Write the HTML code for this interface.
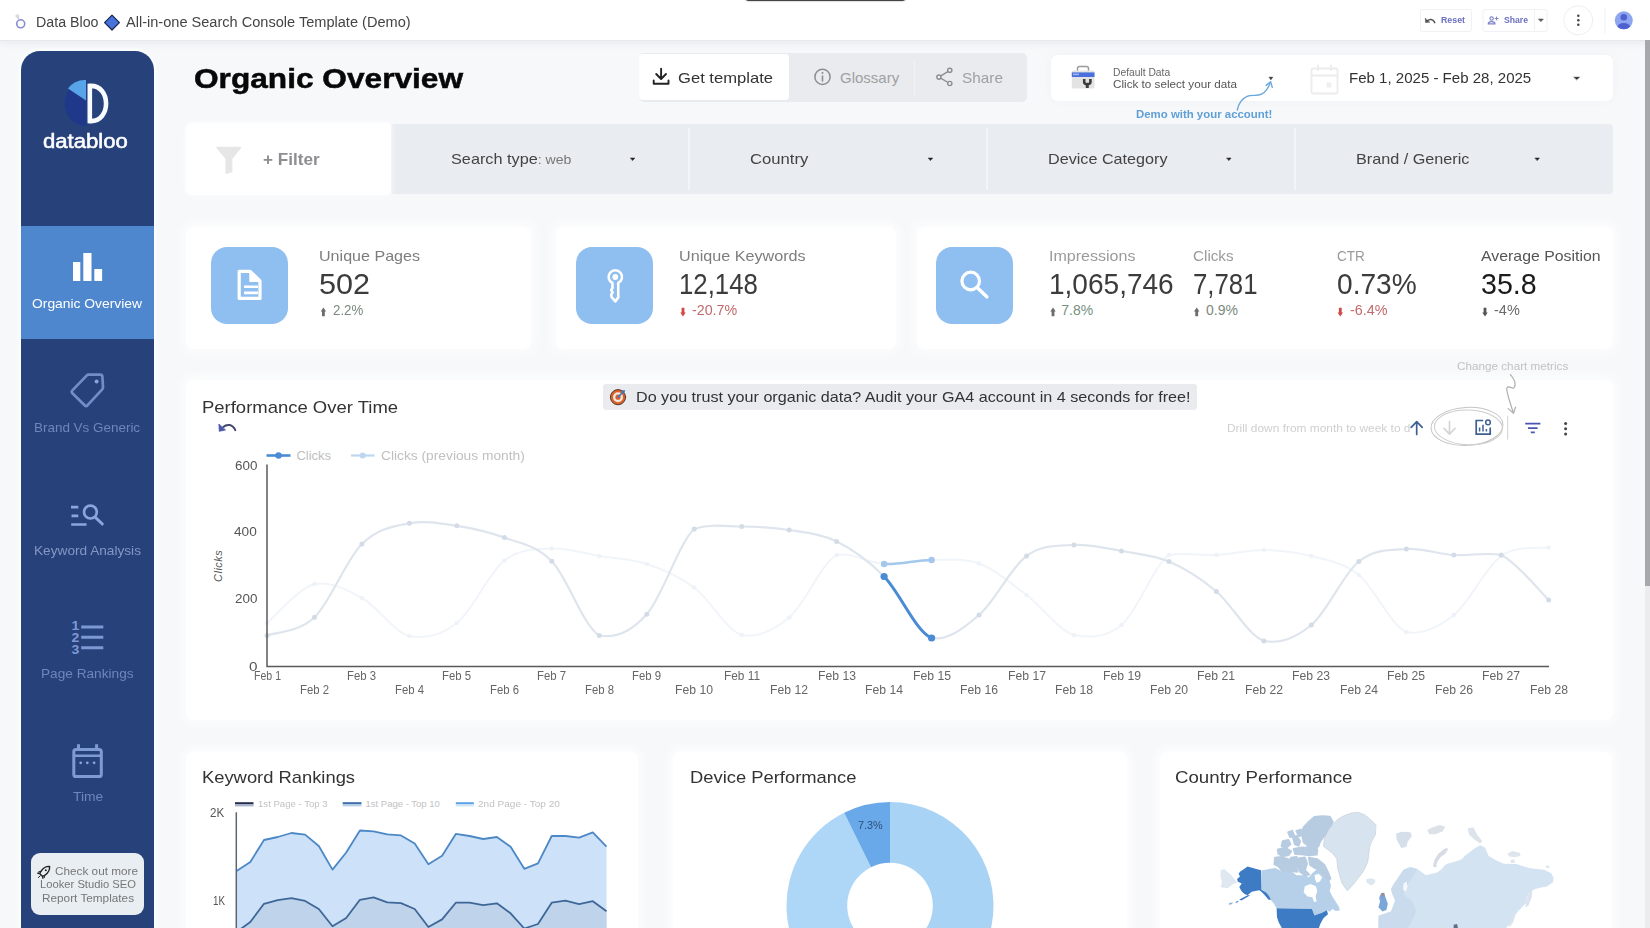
<!DOCTYPE html>
<html lang="en"><head><meta charset="utf-8"><title>All-in-one Search Console Template (Demo)</title>
<style>
html,body{margin:0;padding:0;}
body{width:1650px;height:928px;overflow:hidden;background:#f7f8fa;font-family:"Liberation Sans",sans-serif;position:relative;}
.abs{position:absolute;}
.t{position:absolute;white-space:nowrap;transform-origin:0 50%;}
.card{position:absolute;background:#fff;border-radius:8px;box-shadow:0 0 10px 4px rgba(255,255,255,.9),0 1px 6px rgba(60,70,90,.05);}
.ib{position:absolute;width:77px;height:77px;border-radius:16px;background:#8fbef0;}
svg{position:absolute;overflow:visible;}
</style></head>
<body>

<!-- top bar -->
<div class="abs" style="left:0;top:0;width:1650px;height:40px;background:#fff;border-bottom:1px solid #e6e8eb;box-shadow:0 2px 8px rgba(60,64,67,.08);"></div>
<div class="abs" style="left:744px;top:-9px;width:163px;height:10.2px;background:#444;border-radius:7px;box-shadow:0 0 1.5px rgba(40,40,40,.7);"></div>
<!-- right gutter + scrollbar -->
<div class="abs" style="left:1645px;top:40px;width:5px;height:888px;background:#ececee;"></div>
<div class="abs" style="left:1645px;top:40px;width:5px;height:545.5px;background:#a6a8ab;"></div>

<!-- sidebar -->
<div class="abs" style="left:20.5px;top:51px;width:133.5px;height:880px;background:#27417b;border-radius:19px 19px 0 0;box-shadow:0 0 3px 2px rgba(253,255,255,.9);"></div>
<div class="abs" style="left:20.5px;top:226px;width:133.5px;height:113.3px;background:#4e87cd;"></div>
<div class="abs" style="left:31px;top:853px;width:113px;height:62px;background:#e9eef3;border-radius:9px;"></div>

<!-- header buttons -->
<div class="abs" style="left:639px;top:53px;width:388px;height:49px;background:#e9ebef;border-radius:5px;"></div>
<div class="abs" style="left:639px;top:54px;width:150px;height:46px;background:#fff;border-radius:4px;"></div>
<div class="abs" style="left:913.5px;top:60px;width:1.5px;height:36px;background:#f1f2f5;"></div>
<div class="abs" style="left:1050.5px;top:55px;width:1562px;max-width:562px;height:46px;background:#fff;border-radius:7px;box-shadow:0 0 8px rgba(120,130,150,.06);"></div>

<!-- filter row -->
<div class="abs" style="left:391px;top:124px;width:1222px;height:70px;background:#e9ecf0;border-radius:4px;"></div>
<div class="abs" style="left:185.5px;top:123px;width:205.5px;height:71.5px;background:#fff;border-radius:6px;box-shadow:0 0 6px rgba(255,255,255,.9);"></div>
<div class="abs" style="left:688px;top:128px;width:2px;height:62px;background:#f3f5f7;"></div>
<div class="abs" style="left:986px;top:128px;width:2px;height:62px;background:#f3f5f7;"></div>
<div class="abs" style="left:1294px;top:128px;width:2px;height:62px;background:#f3f5f7;"></div>

<!-- KPI cards -->
<div class="card" style="left:186px;top:227px;width:345px;height:122px;"></div>
<div class="card" style="left:556px;top:227px;width:340px;height:122px;"></div>
<div class="card" style="left:917px;top:227px;width:696px;height:122px;"></div>
<div class="ib" style="left:211px;top:247px;"></div>
<div class="ib" style="left:576px;top:247px;"></div>
<div class="ib" style="left:935.5px;top:247px;"></div>

<!-- chart card -->
<div class="card" style="left:186px;top:380px;width:1427px;height:340px;"></div>
<div class="abs" style="left:603px;top:384px;width:594px;height:26px;background:#e9ebef;border-radius:3px;"></div>

<!-- bottom cards -->
<div class="card" style="left:186px;top:751.5px;width:452px;height:190px;"></div>
<div class="card" style="left:673px;top:751.5px;width:454px;height:190px;"></div>
<div class="card" style="left:1160px;top:751.5px;width:452px;height:190px;"></div>

<svg width="1650" height="928" style="left:0;top:0" viewBox="0 0 1650 928" fill="none" stroke-linecap="round" stroke-linejoin="round">
<circle cx="20.7" cy="23.8" r="4" stroke="#858ad2" stroke-width="1.6"/><circle cx="17.3" cy="16" r="1.3" stroke="#c8cad6" stroke-width="1"/><path d="M17.8,17.2 L19,19.8" stroke="#b9bce0" stroke-width="1"/>
<path d="M112,15.2 L119.4,22.6 L112,30 L104.6,22.6 Z" fill="#4672da" stroke="#18224e" stroke-width="1.2"/>
<rect x="1420.5" y="9.5" width="51" height="22" rx="2" stroke="#f0f1f4" stroke-width="1"/><rect x="1483" y="9.5" width="64" height="22" rx="2" stroke="#f0f1f4" stroke-width="1"/><path d="M1534.5,10 V31" stroke="#f0f1f4" stroke-width="1"/>
<path d="M1427.2,21 C1429.5,18.6 1433,18.8 1434.8,22.6" stroke="#555" stroke-width="1.5"/><path d="M1425.3,18.6 L1425.6,22.6 L1429.4,22.2 Z" fill="#555" stroke="#555" stroke-width=".6"/>
<circle cx="1491.6" cy="18.6" r="1.7" stroke="#7f82c8" stroke-width="1.1"/><path d="M1488.2,23.9 C1488.2,20.9 1495,20.9 1495,23.9 Z" stroke="#7f82c8" stroke-width="1.1"/><path d="M1496.6,17 V20 M1495.1,18.5 H1498.1" stroke="#7f82c8" stroke-width="1"/>
<path d="M1538.6,19 H1543.4 L1541,21.6 Z" fill="#555" stroke="#555" stroke-width=".5"/>
<circle cx="1578.3" cy="20.3" r="14.5" stroke="#eeeff1" stroke-width="1"/><circle cx="1578.3" cy="15.8" r="1.25" fill="#444"/><circle cx="1578.3" cy="20.3" r="1.25" fill="#444"/><circle cx="1578.3" cy="24.8" r="1.25" fill="#444"/>
<path d="M1605,8 V33" stroke="#eef0f2" stroke-width="1"/>
<clipPath id="av"><circle cx="1623.8" cy="20.3" r="9"/></clipPath><circle cx="1623.8" cy="20.3" r="9" fill="#8ea6ef"/><g clip-path="url(#av)"><circle cx="1623.8" cy="17.3" r="3.3" fill="#4e60d2"/><ellipse cx="1623.8" cy="27.6" rx="6.6" ry="4.6" fill="#4e60d2"/></g>
</svg>
<svg width="1650" height="928" style="left:0;top:0" viewBox="0 0 1650 928" fill="none" stroke-linecap="round" stroke-linejoin="round">
<path d="M86.2,81 A21.5,22.5 0 0 0 86.2,126 Z" fill="#1f388a"/><path d="M86,100.5 L86,80 A21,21 0 0 0 68,88.5 Z" fill="#57a4e8"/><path d="M89.8,85.9 C111.5,84.5 111.5,122.5 89.8,121.1 Z" stroke="#f7faff" stroke-width="4.6" stroke-linejoin="miter"/>
<rect x="73" y="262" width="7.3" height="19" fill="#fff"/><rect x="83.3" y="253" width="8.2" height="28" fill="#fff"/><rect x="94.3" y="269" width="7.8" height="12" fill="#fff"/>
<path d="M88.6,374.7 H100.2 Q102.3,374.7 102.4,376.8 L103,387.2 Q103,388.6 102,389.6 L87.6,405.2 Q86.1,406.7 84.6,405.2 L72.4,393.2 Q71,391.8 72.4,390.3 L86.6,375.6 Q87.4,374.7 88.6,374.7 Z" stroke="#728dc8" stroke-width="2.7"/><circle cx="96.6" cy="381.4" r="2" fill="#8aa4da"/>
<path d="M71,507.2 H78.3 M71.5,515.8 H78.3 M71.2,524.5 H86.6" stroke="#8aa6dc" stroke-width="2.7" stroke-linecap="butt"/><circle cx="90.4" cy="512.1" r="6.4" stroke="#8aa6dc" stroke-width="2.7"/><path d="M95.4,517.4 L102.3,524" stroke="#8aa6dc" stroke-width="3"/>
<path d="M81.2,627 H103.3 M81.2,637.3 H103.3 M81.2,647.8 H103.3" stroke="#7d99d5" stroke-width="3" stroke-linecap="butt"/><g font-family="Liberation Sans,sans-serif" font-weight="700" font-size="13" fill="#7d99d5" stroke="none" transform="translate(75.3 0) scale(1.08 1)"><text x="0" y="630.4" text-anchor="middle">1</text><text x="0" y="642.3" text-anchor="middle">2</text><text x="0" y="654.4" text-anchor="middle">3</text></g>
<rect x="73.8" y="749.6" width="27.5" height="27" rx="2.2" stroke="#7f9bd4" stroke-width="3"/><path d="M78.5,744.2 V748.5 M96.6,744.2 V748.5" stroke="#7f9bd4" stroke-width="3" stroke-linecap="butt"/><path d="M75,755.8 H100" stroke="#7f9bd4" stroke-width="2.4"/><circle cx="80.7" cy="762.8" r="1.4" fill="#8aa6dc"/><circle cx="87.3" cy="762.8" r="1.4" fill="#8aa6dc"/><circle cx="94.1" cy="762.8" r="1.4" fill="#8aa6dc"/>
</svg>
<svg width="1650" height="928" style="left:0;top:0" viewBox="0 0 1650 928" fill="none" stroke-linecap="round" stroke-linejoin="round">
<path d="M661.1,68.8 V78.6 M656.2,74 L661.1,79 L666,74 M653.7,80.4 V83.7 H668.5 V80.4" stroke="#222" stroke-width="1.9"/>
<circle cx="822.5" cy="76.9" r="7.6" stroke="#8e8e8e" stroke-width="1.5"/><path d="M822.5,76 V81" stroke="#8e8e8e" stroke-width="1.6"/><circle cx="822.5" cy="72.9" r="1" fill="#8e8e8e"/>
<path d="M949.8,70.3 L938.9,77.1 L949.8,83.5" stroke="#8e8e8e" stroke-width="1.4"/><circle cx="938.9" cy="77.1" r="2.1" fill="#e9ebef" stroke="#8e8e8e" stroke-width="1.4"/><circle cx="949.8" cy="70.3" r="2.1" fill="#e9ebef" stroke="#8e8e8e" stroke-width="1.4"/><circle cx="949.8" cy="83.5" r="2.1" fill="#e9ebef" stroke="#8e8e8e" stroke-width="1.4"/>
<path d="M1077.5,70.5 V68.6 Q1077.5,66.6 1079.5,66.6 H1086.5 Q1088.5,66.6 1088.5,68.6 V70.5" stroke="#9a9a9a" stroke-width="1.5"/><rect x="1071.8" y="70.6" width="22.7" height="17.8" rx="1.5" fill="#e3e3e3"/><rect x="1071.8" y="72.4" width="22.7" height="4.6" fill="#4a70de"/><rect x="1073" y="73.6" width="6" height="1.6" fill="#9fb6f0"/><path d="M1084.2,79 V82.2 C1084.2,84.6 1090.4,84.6 1090.4,82.2 V79" stroke="#3c3c3c" stroke-width="2.6" stroke-linecap="butt"/><path d="M1087.3,84 V88" stroke="#3c3c3c" stroke-width="3" stroke-linecap="butt"/>
<path d="M1269.3,77.2 H1272.7 L1271,79.60000000000001 Z" fill="#222" stroke="#222" stroke-width=".5"/><path d="M1574.1,77.2 H1579.5 L1576.8,79.60000000000001 Z" fill="#222" stroke="#222" stroke-width=".5"/><path d="M630.6,158 H634.8000000000001 L632.7,160.4 Z" fill="#222" stroke="#222" stroke-width=".5"/><path d="M928.5,158 H932.7 L930.6,160.4 Z" fill="#222" stroke="#222" stroke-width=".5"/><path d="M1226.9,158 H1231.1 L1229,160.4 Z" fill="#222" stroke="#222" stroke-width=".5"/><path d="M1535.2,158 H1539.3999999999999 L1537.3,160.4 Z" fill="#222" stroke="#222" stroke-width=".5"/>
<path d="M1237.3,110 C1238.5,104 1241.5,99 1247,96.4 C1252,94.2 1257,96.6 1261.5,94.2 C1266,91.8 1268.6,87.5 1270.2,82.6" stroke="#6aa7da" stroke-width="1.4"/><path d="M1266.2,85.4 L1270.6,81.8 L1272.3,87.4" stroke="#6aa7da" stroke-width="1.4"/>
<rect x="1311.5" y="68.5" width="26" height="25" rx="2" stroke="#ececec" stroke-width="1.8"/><path d="M1312,75.5 H1337 M1318,65.5 V70 M1331,65.5 V70" stroke="#ececec" stroke-width="1.8"/><rect x="1326.5" y="82.5" width="5" height="5" fill="#efefef"/>
<path d="M216.8,147.4 H240.8 L231.8,158.6 V171.6 L226,173.4 V158.6 Z" fill="#e6e6e6" stroke="#e6e6e6" stroke-width="1.2" filter="url(#bl)"/><filter id="bl"><feGaussianBlur stdDeviation=".7"/></filter>
<path d="M239.2,271.3 H250.2 L260,281 V298.4 H239.2 Z" stroke="#fff" stroke-width="3.2" stroke-linejoin="round"/><path d="M250,271.5 V281.2 H259.8 Z" fill="#fff" stroke="#fff" stroke-width="1.5"/><path d="M244,286.7 H258 M244,292.9 H258" stroke="#fff" stroke-width="2.6" stroke-linecap="butt"/>
<path d="M612.4,283 A6.7,6.7 0 1 1 618.2,283 L618.3,297.4 L615.3,301.4 L611.6,297.2 L611.2,294.8 L612.6,292.4 L611.2,290.2 L612.5,288 Z" stroke="#fff" stroke-width="2.6"/><circle cx="615.3" cy="277" r="2.9" fill="#fff"/>
<circle cx="970.7" cy="281" r="8.8" stroke="#fff" stroke-width="3.2"/><path d="M977.6,288 L986.8,296.8" stroke="#fff" stroke-width="3.5"/>
<path d="M323.4,307.6 L326.09999999999997,311.40000000000003 L324.79999999999995,311.40000000000003 L324.79999999999995,316.20000000000005 L322.0,316.20000000000005 L322.0,311.40000000000003 L320.7,311.40000000000003 Z" fill="#6c6c6c"/><path d="M683,316.4 L685.7,312.59999999999997 L684.4,312.59999999999997 L684.4,307.79999999999995 L681.6,307.79999999999995 L681.6,312.59999999999997 L680.3,312.59999999999997 Z" fill="#d24848"/><path d="M1053,307.6 L1055.7,311.40000000000003 L1054.4,311.40000000000003 L1054.4,316.20000000000005 L1051.6,316.20000000000005 L1051.6,311.40000000000003 L1050.3,311.40000000000003 Z" fill="#6c6c6c"/><path d="M1196.7,307.6 L1199.4,311.40000000000003 L1198.1000000000001,311.40000000000003 L1198.1000000000001,316.20000000000005 L1195.3,316.20000000000005 L1195.3,311.40000000000003 L1194.0,311.40000000000003 Z" fill="#6c6c6c"/><path d="M1340.3,316.4 L1343.0,312.59999999999997 L1341.7,312.59999999999997 L1341.7,307.79999999999995 L1338.8999999999999,307.79999999999995 L1338.8999999999999,312.59999999999997 L1337.6,312.59999999999997 Z" fill="#d24848"/><path d="M1485,316.4 L1487.7,312.59999999999997 L1486.4,312.59999999999997 L1486.4,307.79999999999995 L1483.6,307.79999999999995 L1483.6,312.59999999999997 L1482.3,312.59999999999997 Z" fill="#555"/>
<path d="M223.3,427 C227,423.6 232.6,424.2 235.3,430.2" stroke="#44486c" stroke-width="2"/><path d="M218.9,424.4 L219.3,431.3 L225.2,430 Z" fill="#4a56aa" stroke="#4a56aa" stroke-width=".8"/>
<circle cx="618" cy="397.2" r="7.6" fill="#d9622b" stroke="#5a3a2a" stroke-width="1"/><circle cx="618" cy="397.2" r="5" fill="#f3e6da"/><circle cx="618" cy="397.2" r="2.6" fill="#d9622b"/><path d="M618,397.2 L623.6,391.4" stroke="#3b78c4" stroke-width="1.6"/><path d="M622,390.6 L625,390 L624.4,393 Z" fill="#3b78c4"/>
<path d="M1416.7,434.4 V421.8 M1411.2,427.3 L1416.7,421.6 L1422.2,427.3" stroke="#3d5f92" stroke-width="1.7"/><path d="M1449.5,421.4 V434 M1444,428.4 L1449.5,434.2 L1455,428.4" stroke="#d6d6d6" stroke-width="1.7"/>
<path d="M1482.5,420.5 H1476.2 V434.2 H1490.2 V428.2" stroke="#3d5f92" stroke-width="1.7" stroke-linejoin="miter"/><path d="M1479.6,431.4 V427.6 M1483,431.4 V424.8 M1486.4,431.4 V429" stroke="#3d5f92" stroke-width="1.5" stroke-linecap="butt"/><circle cx="1488" cy="422.4" r="2.3" stroke="#3d5f92" stroke-width="1.5"/>
<ellipse cx="1467" cy="426.4" rx="36" ry="19" stroke="#c4c4c4" stroke-width="1" transform="rotate(-3 1467 426.4)"/><ellipse cx="1468.5" cy="427.4" rx="34" ry="17.4" stroke="#cdcdcd" stroke-width="1" transform="rotate(2 1468 427)"/>
<path d="M1507.7,416.2 V439.2" stroke="#d0d0d0" stroke-width="1"/>
<path d="M1510.5,374.6 C1512.5,377.5 1514.8,380 1515,383 C1515.2,386.4 1514.4,388.8 1512.2,388 C1510.4,387.2 1508,385.8 1506.9,388 C1505.9,390.2 1508.4,398 1513.4,412.8" stroke="#adadad" stroke-width="1.2"/><path d="M1508.2,408.6 L1513.6,413.2 L1515.5,407.2" stroke="#adadad" stroke-width="1.2"/>
<path d="M1525.2,423.6 H1540.4 M1528,428.2 H1537.6 M1530.8,432.4 H1534.8" stroke="#4a56b0" stroke-width="1.8" stroke-linecap="butt"/><circle cx="1565.6" cy="423.6" r="1.5" fill="#444"/><circle cx="1565.6" cy="428.8" r="1.5" fill="#444"/><circle cx="1565.6" cy="434" r="1.5" fill="#444"/>
<path d="M49.6,866.4 C46.6,866.2 43.2,868 41.2,871 L39.6,873.6 L42.6,876.4 L45.2,875 C48.2,873 49.8,869.6 49.6,866.4 Z" stroke="#222" stroke-width="1.4"/><path d="M41,871.4 L38.6,871.8 L37.6,873.6 L39.6,873.6 M44.8,875.2 L44.4,877.6 L42.6,878.4 L42.6,876.4 M40.2,875.8 L38.4,877.6" stroke="#222" stroke-width="1"/><circle cx="45.8" cy="870.2" r="1" fill="#222"/>
</svg>
<svg width="1650" height="928" style="left:0;top:0" viewBox="0 0 1650 928">
<path d="M267.0,623.0 C274.9,616.5 298.6,588.2 314.5,584.0 C330.3,581.0 346.1,589.3 361.9,598.0 C377.8,606.7 393.6,631.8 409.4,636.0 C425.2,639.0 441.1,635.6 456.9,623.0 C472.7,610.4 488.5,573.0 504.4,560.6 C520.2,548.2 536.0,549.3 551.8,548.5 C567.6,547.7 583.5,553.4 599.3,556.0 C615.1,558.6 630.9,558.8 646.8,564.0 C662.6,569.2 678.4,575.7 694.2,587.5 C710.1,599.3 725.9,630.0 741.7,635.0 C757.5,638.0 773.3,630.8 789.2,617.5 C805.0,604.2 820.8,563.9 836.6,555.0 C852.5,552.0 868.3,563.2 884.1,564.0 C899.9,564.8 915.8,560.1 931.6,560.0 C947.4,559.9 963.2,557.7 979.0,563.5 C994.9,569.3 1010.7,583.1 1026.5,595.0 C1042.3,606.9 1058.2,630.0 1074.0,635.0 C1089.8,638.0 1105.6,638.0 1121.5,625.0 C1137.3,611.7 1153.1,566.7 1168.9,555.0 C1184.8,552.0 1200.6,555.8 1216.4,555.0 C1232.2,554.2 1248.0,549.8 1263.9,550.0 C1279.7,550.2 1295.5,551.8 1311.3,556.0 C1327.2,560.2 1343.0,562.3 1358.8,575.0 C1374.6,587.7 1390.5,625.3 1406.3,632.0 C1422.1,635.0 1437.9,627.7 1453.8,615.0 C1469.6,602.3 1485.4,567.2 1501.2,556.0 C1517.0,544.8 1540.8,548.9 1548.7,547.5" fill="none" stroke="#f1f5fa" stroke-width="2"/>
<circle cx="267.0" cy="623" r="2.3" fill="#eef3f9"/><circle cx="314.5" cy="584" r="2.3" fill="#eef3f9"/><circle cx="361.9" cy="598" r="2.3" fill="#eef3f9"/><circle cx="409.4" cy="636" r="2.3" fill="#eef3f9"/><circle cx="456.9" cy="623" r="2.3" fill="#eef3f9"/><circle cx="504.4" cy="560.6" r="2.3" fill="#eef3f9"/><circle cx="551.8" cy="548.5" r="2.3" fill="#eef3f9"/><circle cx="599.3" cy="556" r="2.3" fill="#eef3f9"/><circle cx="646.8" cy="564" r="2.3" fill="#eef3f9"/><circle cx="694.2" cy="587.5" r="2.3" fill="#eef3f9"/><circle cx="741.7" cy="635" r="2.3" fill="#eef3f9"/><circle cx="789.2" cy="617.5" r="2.3" fill="#eef3f9"/><circle cx="836.6" cy="555" r="2.3" fill="#eef3f9"/><circle cx="884.1" cy="564" r="2.3" fill="#eef3f9"/><circle cx="931.6" cy="560" r="2.3" fill="#eef3f9"/><circle cx="979.0" cy="563.5" r="2.3" fill="#eef3f9"/><circle cx="1026.5" cy="595" r="2.3" fill="#eef3f9"/><circle cx="1074.0" cy="635" r="2.3" fill="#eef3f9"/><circle cx="1121.5" cy="625" r="2.3" fill="#eef3f9"/><circle cx="1168.9" cy="555" r="2.3" fill="#eef3f9"/><circle cx="1216.4" cy="555" r="2.3" fill="#eef3f9"/><circle cx="1263.9" cy="550" r="2.3" fill="#eef3f9"/><circle cx="1311.3" cy="556" r="2.3" fill="#eef3f9"/><circle cx="1358.8" cy="575" r="2.3" fill="#eef3f9"/><circle cx="1406.3" cy="632" r="2.3" fill="#eef3f9"/><circle cx="1453.8" cy="615" r="2.3" fill="#eef3f9"/><circle cx="1501.2" cy="556" r="2.3" fill="#eef3f9"/><circle cx="1548.7" cy="547.5" r="2.3" fill="#eef3f9"/>
<path d="M267.0,635.5 C274.9,632.5 298.6,632.5 314.5,617.3 C330.3,602.0 346.1,559.7 361.9,544.0 C377.8,528.3 393.6,526.3 409.4,523.3 C425.2,520.3 441.1,523.4 456.9,525.8 C472.7,528.2 488.5,531.7 504.4,537.6 C520.2,543.5 536.0,544.9 551.8,561.2 C567.6,577.5 583.5,626.7 599.3,635.5 C615.1,638.5 630.9,632.0 646.8,614.2 C662.6,596.5 678.4,543.6 694.2,529.0 C710.1,523.5 725.9,526.3 741.7,526.5 C757.5,526.7 773.3,527.5 789.2,530.0 C805.0,532.5 820.8,533.8 836.6,541.5 C852.5,549.2 868.3,560.4 884.1,576.5 C899.9,592.6 915.8,631.6 931.6,638.0 C947.4,641.0 963.2,628.7 979.0,615.0 C994.9,601.3 1010.7,567.7 1026.5,556.0 C1042.3,544.3 1058.2,545.8 1074.0,545.0 C1089.8,544.2 1105.6,548.2 1121.5,551.0 C1137.3,553.8 1153.1,554.8 1168.9,561.5 C1184.8,568.2 1200.6,578.2 1216.4,591.5 C1232.2,604.8 1248.0,635.4 1263.9,641.0 C1279.7,644.0 1295.5,638.2 1311.3,625.0 C1327.2,611.8 1343.0,574.2 1358.8,561.5 C1374.6,548.8 1390.5,550.1 1406.3,549.0 C1422.1,547.9 1437.9,554.0 1453.8,555.0 C1469.6,556.0 1485.4,552.0 1501.2,555.0 C1517.0,562.5 1540.8,592.5 1548.7,600.0" fill="none" stroke="#dee5ed" stroke-width="2.2"/>
<circle cx="267.0" cy="635.5" r="2.5" fill="#d3dce6"/><circle cx="314.5" cy="617.3" r="2.5" fill="#d3dce6"/><circle cx="361.9" cy="544" r="2.5" fill="#d3dce6"/><circle cx="409.4" cy="523.3" r="2.5" fill="#d3dce6"/><circle cx="456.9" cy="525.8" r="2.5" fill="#d3dce6"/><circle cx="504.4" cy="537.6" r="2.5" fill="#d3dce6"/><circle cx="551.8" cy="561.2" r="2.5" fill="#d3dce6"/><circle cx="599.3" cy="635.5" r="2.5" fill="#d3dce6"/><circle cx="646.8" cy="614.2" r="2.5" fill="#d3dce6"/><circle cx="694.2" cy="529" r="2.5" fill="#d3dce6"/><circle cx="741.7" cy="526.5" r="2.5" fill="#d3dce6"/><circle cx="789.2" cy="530" r="2.5" fill="#d3dce6"/><circle cx="836.6" cy="541.5" r="2.5" fill="#d3dce6"/><circle cx="884.1" cy="576.5" r="2.5" fill="#d3dce6"/><circle cx="931.6" cy="638" r="2.5" fill="#d3dce6"/><circle cx="979.0" cy="615" r="2.5" fill="#d3dce6"/><circle cx="1026.5" cy="556" r="2.5" fill="#d3dce6"/><circle cx="1074.0" cy="545" r="2.5" fill="#d3dce6"/><circle cx="1121.5" cy="551" r="2.5" fill="#d3dce6"/><circle cx="1168.9" cy="561.5" r="2.5" fill="#d3dce6"/><circle cx="1216.4" cy="591.5" r="2.5" fill="#d3dce6"/><circle cx="1263.9" cy="641" r="2.5" fill="#d3dce6"/><circle cx="1311.3" cy="625" r="2.5" fill="#d3dce6"/><circle cx="1358.8" cy="561.5" r="2.5" fill="#d3dce6"/><circle cx="1406.3" cy="549" r="2.5" fill="#d3dce6"/><circle cx="1453.8" cy="555" r="2.5" fill="#d3dce6"/><circle cx="1501.2" cy="555" r="2.5" fill="#d3dce6"/><circle cx="1548.7" cy="600" r="2.5" fill="#d3dce6"/>
<path d="M884.1,564.0 C899.9,564.8 915.8,560.1 931.6,560.0" fill="none" stroke="#a3c8ec" stroke-width="2.6"/><circle cx="884.1" cy="564" r="3.2" fill="#a3c8ec"/><circle cx="931.6" cy="560" r="3.2" fill="#a3c8ec"/>
<path d="M884.1,576.5 C899.9,592.6 915.8,631.6 931.6,638.0" fill="none" stroke="#4a8bd4" stroke-width="3"/><circle cx="884.1" cy="576.5" r="3.6" fill="#4a8bd4"/><circle cx="931.6" cy="638" r="3.6" fill="#4a8bd4"/>
<path d="M267,464.5 V666.4 H1549" fill="none" stroke="#5a5a5a" stroke-width="1.5"/>
<path d="M266.5,455.5 H290.5" stroke="#4a8bd4" stroke-width="2.6"/><circle cx="278.5" cy="455.5" r="3.2" fill="#4a8bd4"/><path d="M351,455.5 H374.5" stroke="#bcd7ee" stroke-width="2.2"/><circle cx="362.7" cy="455.5" r="3" fill="#bcd7ee"/>
</svg>
<svg width="1650" height="928" style="left:0;top:0" viewBox="0 0 1650 928">
<polygon points="236.6,871.0 250.3,862.0 264.0,840.0 277.7,837.0 291.4,833.0 305.1,834.6 318.8,846.0 332.5,869.6 346.2,852.5 359.9,830.5 373.6,831.4 387.3,834.3 401.0,835.4 414.7,843.6 428.4,864.2 442.1,855.8 455.8,833.9 469.5,836.0 483.2,839.0 496.9,837.0 510.6,846.7 524.3,868.8 538.0,863.3 551.7,836.0 565.4,836.0 579.1,837.6 592.8,832.4 606.5,846.7 606.5,940 236.6,940" fill="#cde2f8"/>
<polygon points="236.6,932.0 250.3,922.0 264.0,903.8 277.7,900.1 291.4,898.2 305.1,900.9 318.8,909.0 332.5,926.2 346.2,918.0 359.9,899.8 373.6,897.4 387.3,902.4 401.0,903.1 414.7,909.0 428.4,927.0 442.1,919.4 455.8,902.7 469.5,902.7 483.2,905.2 496.9,903.3 510.6,913.3 524.3,928.5 538.0,924.0 551.7,902.7 565.4,900.6 579.1,904.2 592.8,901.2 606.5,911.2 606.5,940 236.6,940" fill="#bfd3ea"/>
<polyline points="236.6,871.0 250.3,862.0 264.0,840.0 277.7,837.0 291.4,833.0 305.1,834.6 318.8,846.0 332.5,869.6 346.2,852.5 359.9,830.5 373.6,831.4 387.3,834.3 401.0,835.4 414.7,843.6 428.4,864.2 442.1,855.8 455.8,833.9 469.5,836.0 483.2,839.0 496.9,837.0 510.6,846.7 524.3,868.8 538.0,863.3 551.7,836.0 565.4,836.0 579.1,837.6 592.8,832.4 606.5,846.7" fill="none" stroke="#4d88c6" stroke-width="1.8" stroke-linejoin="round"/>
<polyline points="236.6,932.0 250.3,922.0 264.0,903.8 277.7,900.1 291.4,898.2 305.1,900.9 318.8,909.0 332.5,926.2 346.2,918.0 359.9,899.8 373.6,897.4 387.3,902.4 401.0,903.1 414.7,909.0 428.4,927.0 442.1,919.4 455.8,902.7 469.5,902.7 483.2,905.2 496.9,903.3 510.6,913.3 524.3,928.5 538.0,924.0 551.7,902.7 565.4,900.6 579.1,904.2 592.8,901.2 606.5,911.2" fill="none" stroke="#3e6798" stroke-width="1.8" stroke-linejoin="round"/>
<path d="M236.3,812.3 V930" stroke="#5a6472" stroke-width="1.5"/>
<rect x="235" y="802.2" width="18.5" height="2.2" fill="#262c4e"/><rect x="235" y="804.4" width="18.5" height="2" fill="#aab4cc"/><rect x="342.7" y="802.2" width="18.8" height="2.2" fill="#3a6ea8"/><rect x="342.7" y="804.4" width="18.8" height="2" fill="#b8cfe8"/><rect x="455.8" y="802.2" width="18" height="2.2" fill="#5ba3e2"/><rect x="455.8" y="804.4" width="18" height="2" fill="#cfe4f8"/>
</svg>
<svg width="1650" height="928" style="left:0;top:0" viewBox="0 0 1650 928">
<path d="M890.00,802.10 A103.5,103.5 0 1 1 854.60,1002.86 L875.36,945.82 A42.8,42.8 0 1 0 890.00,862.80 Z" fill="#a9d3f5"/><path d="M854.60,1002.86 A103.5,103.5 0 0 1 844.14,812.81 L871.04,867.23 A42.8,42.8 0 0 0 875.36,945.82 Z" fill="#aed7f7"/><path d="M844.14,812.81 A103.5,103.5 0 0 1 890.00,802.10 L890.00,862.80 A42.8,42.8 0 0 0 871.04,867.23 Z" fill="#69a9e9"/>
</svg>
<svg width="1650" height="928" style="left:0;top:0" viewBox="0 0 1650 928">
<g stroke-linejoin="round">
<polygon points="1220.7,870.3 1224.1,869.0 1231.7,875.2 1237.2,882.8 1233.1,884.1 1227.6,888.3 1220.7,887.2 1222.1,881.4 1220.4,877.2" fill="#dfe8f1"/>
<polygon points="1261.4,870.6 1269.0,869.0 1275.2,867.9 1282.8,871.7 1291.0,871.0 1296.6,875.2 1304.8,875.2 1309.0,877.2 1312.4,873.1 1317.2,869.0 1324.1,869.7 1328.3,877.2 1331.0,885.5 1329.7,891.0 1332.4,896.6 1335.9,902.1 1338.6,906.2 1340.0,910.3 1335.9,911.0 1332.4,909.0 1329.7,911.7 1326.9,910.3 1321.4,913.1 1317.2,915.2 1314.5,915.6 1312.0,909.0 1276.6,908.3 1273.8,903.4 1271.0,900.0 1266.2,892.4 1261.4,889.7" fill="#b6d0ea"/>
<polygon points="1304.8,886.2 1310.3,884.1 1315.9,886.2 1317.2,891.0 1315.6,896.6 1316.7,901.4 1313.9,902.1 1312.4,897.2 1307.6,896.6 1303.7,892.4" fill="#fff"/>
<polygon points="1314.5,875.2 1318.6,873.8 1322.1,877.2 1320.0,881.4 1316.6,882.8 1315.2,879.3" fill="#fff"/>
<polygon points="1314.5,817.2 1322.1,816.3 1329.7,816.8 1332.7,822.1 1329.0,829.7 1324.1,836.1 1320.0,841.4 1318.3,846.2 1310.3,847.2 1303.7,842.1 1301.8,833.1 1303.7,827.6 1309.0,821.8" fill="#b7cbe1" stroke="#b7cbe1" stroke-width="2.2"/>
<polygon points="1282.8,841.4 1288.3,840.0 1290.3,844.1 1286.2,847.6 1281.7,846.2" fill="#b7cbe1" stroke="#b7cbe1" stroke-width="2.2"/>
<polygon points="1293.1,837.2 1296.6,836.1 1300.0,841.4 1298.6,845.5 1294.9,844.1" fill="#b7cbe1" stroke="#b7cbe1" stroke-width="2.2"/>
<polygon points="1277.9,849.7 1285.5,848.3 1291.0,851.3 1288.3,855.2 1282.8,855.9 1278.6,853.8" fill="#b7cbe1" stroke="#b7cbe1" stroke-width="2.2"/>
<polygon points="1293.8,849.0 1302.1,847.6 1309.0,848.3 1317.2,849.7 1316.6,854.5 1309.0,855.2 1302.1,854.1 1295.2,853.8" fill="#b7cbe1" stroke="#b7cbe1" stroke-width="2.2"/>
<polygon points="1275.2,857.9 1281.4,857.2 1288.3,859.3 1296.6,860.7 1295.9,866.2 1297.2,871.7 1291.0,871.0 1282.8,871.4 1278.6,866.2 1274.5,864.1" fill="#b7cbe1" stroke="#b7cbe1" stroke-width="2.2"/>
<polygon points="1298.6,858.6 1304.8,857.7 1306.9,863.4 1304.8,870.3 1309.0,874.5 1304.8,875.2 1300.0,871.7 1297.2,864.8" fill="#b7cbe1" stroke="#b7cbe1" stroke-width="2.2"/>
<polygon points="1309.0,857.9 1317.2,859.3 1324.1,864.8 1327.6,871.7 1330.3,878.6 1328.3,880.0 1324.1,874.5 1320.0,869.7 1314.5,867.6 1310.3,864.8" fill="#b7cbe1" stroke="#b7cbe1" stroke-width="2.2"/>
<polygon points="1288.3,832.4 1292.1,831.0 1293.8,835.2 1290.3,837.0" fill="#b7cbe1" stroke="#b7cbe1" stroke-width="2.2"/>
<polygon points="1296.6,831.0 1300.7,829.7 1302.3,834.5 1299.0,836.1" fill="#b7cbe1" stroke="#b7cbe1" stroke-width="2.2"/>
<polygon points="1306.2,847.6 1312.4,846.2 1317.2,847.6 1313.1,850.3" fill="#b7cbe1" stroke="#b7cbe1" stroke-width="2.2"/>
<polygon points="1291.0,857.9 1296.6,857.2 1297.2,861.4 1292.1,862.1" fill="#b7cbe1" stroke="#b7cbe1" stroke-width="2.2"/>
<polygon points="1344.8,815.4 1351.7,813.1 1358.6,812.4 1365.5,815.4 1369.9,819.3 1375.9,824.8 1375.4,834.5 1371.7,841.4 1369.4,847.6 1368.6,855.2 1367.6,862.1 1364.8,868.3 1362.5,872.4 1354.5,882.8 1349.7,888.3 1347.3,890.6 1344.1,886.2 1341.8,882.5 1339.6,874.5 1337.9,869.0 1336.8,858.6 1332.4,853.1 1328.3,849.9 1323.4,846.2 1324.8,837.9 1329.0,829.7 1332.7,824.8 1337.9,819.3" fill="#d7e4ef" stroke="#cfd8e2" stroke-width="1"/>
<polygon points="1366.2,879.3 1371.0,878.3 1375.2,880.0 1374.1,883.3 1369.7,884.4 1366.6,882.8" fill="#dde7f0"/>
<polygon points="1276.6,908.3 1312.0,909.0 1314.5,915.6 1321.4,913.1 1326.9,910.3 1328.0,914.2 1323.4,918.3 1320.3,924.1 1318.3,929.7 1282.8,929.7 1278.9,922.8 1277.0,917.2" fill="#3d7cc5"/>
<polygon points="1240.0,871.7 1247.6,866.5 1254.5,868.6 1261.0,870.3 1261.4,889.7 1266.2,892.4 1269.0,895.9 1271.0,900.0 1268.3,899.6 1264.8,895.2 1261.4,891.7 1259.3,890.3 1255.2,891.0 1251.7,891.7 1247.6,895.2 1244.1,893.8 1241.4,891.0 1239.3,886.9 1241.7,883.4 1237.9,881.7 1237.0,878.9 1240.0,876.6 1238.6,873.8" fill="#3d7cc5"/>
<polygon points="1247.6,895.2 1250.3,895.2 1241.4,900.4 1239.3,899.6" fill="#3d7cc5"/><polygon points="1236.1,901.4 1238.6,900.7 1237.8,902.3 1235.6,902.9" fill="#4d86c8"/><polygon points="1229.0,903.2 1232.8,902.3 1232.0,904.3 1228.7,904.8" fill="#8fb2da"/>
<polygon points="1390.9,889.2 1393.7,883.6 1397.9,878.1 1403.5,869.7 1410.4,866.9 1416.0,868.3 1420.2,871.1 1425.8,875.3 1431.3,873.9 1436.9,872.5 1441.1,869.7 1445.3,864.8 1448.1,863.4 1456.4,861.3 1462.0,859.2 1464.8,855.8 1470.4,851.6 1475.9,847.4 1480.1,845.3 1485.0,847.4 1488.5,855.8 1495.5,859.9 1503.8,863.8 1516.4,864.1 1523.3,866.2 1530.3,868.3 1544.2,869.7 1551.2,873.2 1553.7,878.1 1552.9,882.2 1547.0,886.4 1540.1,887.8 1534.5,889.2 1528.9,892.7 1526.8,897.6 1526.1,903.2 1521.2,908.0 1517.8,911.5 1515.0,915.7 1513.6,919.9 1509.4,924.1 1503.8,931.0 1378.4,931.0 1378.6,915.7 1385.3,913.6 1390.9,911.5 1393.7,905.9 1395.1,900.4 1392.3,894.8" fill="#d4e3f1"/>
<polygon points="1390.9,889.2 1397.9,878.1 1403.5,869.7 1410.4,866.9 1417.4,869.7 1411.8,878.1 1406.2,886.4 1403.5,894.8 1411.8,900.4 1416.0,911.5 1411.8,921.3 1406.2,931.0 1378.4,931.0 1378.6,915.7 1390.9,911.5 1395.1,900.4" fill="#c9dbec"/>
<polygon points="1403.5,883.6 1406.5,881.5 1407.6,886.4 1405.5,892.0 1403.2,889.2" fill="#fff" opacity=".8"/>
<polygon points="1396.2,833.5 1402.1,831.8 1410.4,832.3 1411.8,836.2 1407.6,841.8 1406.5,846.7 1401.4,848.1 1398.6,843.2 1396.5,839.0" fill="#d5dfea"/>
<polygon points="1427.2,830.0 1432.7,827.2 1439.7,825.1 1445.3,826.8 1442.5,831.4 1435.5,834.2 1429.2,834.2" fill="#dde2e9"/>
<polygon points="1446.0,848.1 1448.3,849.1 1445.3,853.7 1440.4,857.2 1436.9,862.7 1436.2,867.6 1433.0,866.6 1434.4,859.9 1438.3,853.7 1442.5,850.2" fill="#d5dce5"/>
<polygon points="1467.6,828.6 1473.2,827.2 1477.3,834.8 1482.2,841.1 1480.1,843.5 1473.8,839.0 1469.2,834.8" fill="#dde3ea"/>
<polygon points="1507.3,853.7 1512.2,850.9 1519.8,852.7 1520.5,855.8 1515.0,857.2 1509.4,856.5" fill="#dfe5ec"/>
<polygon points="1545.9,865.8 1549.1,865.5 1549.5,867.7 1546.3,868.0" fill="#dfe5ec"/>
<polygon points="1510.5,859.9 1514.3,859.2 1515.0,862.7 1511.1,863.0" fill="#dfe5ec"/>
<polygon points="1528.9,892.0 1532.4,890.6 1531.7,897.6 1528.2,905.9 1525.4,907.3 1526.4,900.4" fill="#dbe4ee"/>
<polygon points="1512.9,914.3 1515.7,913.6 1513.6,921.3 1510.1,926.8 1508.3,926.1 1511.1,919.9" fill="#dbe4ee"/>
<polygon points="1380.9,893.7 1383.9,893.1 1385.6,897.6 1387.8,903.8 1386.4,910.1 1382.5,911.5 1378.4,907.3 1380.0,901.8 1379.2,897.6" fill="#7aa6d8"/>
<polygon points="1381.2,893.1 1384.2,892.7 1384.8,896.2 1381.7,896.7" fill="#9d8f94"/>
<polygon points="1370.0,825.1 1375.3,824.0 1375.9,829.3 1372.5,840.4 1370.0,846.0" fill="#d7e4ef"/>
<polygon points="1370.0,879.5 1374.2,878.8 1375.3,882.2 1372.8,885.0 1370.0,885.3" fill="#dde7f0"/>
<polygon points="1453.6,924.8 1457.1,924.1 1458.5,931.0 1453.6,931.0" fill="#5f6f8a"/>
</g></svg>
<span class="t" style="left:36.0px;top:14.3px;font-size:14px;line-height:16.80px;color:#444;transform:scaleX(1.017);">Data Bloo</span>
<span class="t" style="left:125.5px;top:14.3px;font-size:14px;line-height:16.80px;color:#444;transform:scaleX(1.040);">All-in-one Search Console Template (Demo)</span>
<span class="t" style="left:1441.0px;top:15.4px;font-size:9px;line-height:10.80px;color:#6a6fc0;font-weight:700;transform:scaleX(0.979);">Reset</span>
<span class="t" style="left:1504.0px;top:15.4px;font-size:9px;line-height:10.80px;color:#6a6fc0;font-weight:700;transform:scaleX(0.959);">Share</span>
<span class="t" style="left:42.7px;top:128.6px;font-size:20.5px;line-height:24.60px;color:#fff;transform:scaleX(1.079);-webkit-text-stroke:.55px #fff;">databloo</span>
<span class="t" style="left:32.3px;top:295.6px;font-size:13px;line-height:15.60px;color:#fff;transform:scaleX(1.065);">Organic Overview</span>
<span class="t" style="left:34.4px;top:419.6px;font-size:13px;line-height:15.60px;color:#6e86bb;transform:scaleX(1.034);">Brand Vs Generic</span>
<span class="t" style="left:34.0px;top:542.6px;font-size:13px;line-height:15.60px;color:#8497c4;transform:scaleX(1.050);">Keyword Analysis</span>
<span class="t" style="left:41.4px;top:665.9px;font-size:13px;line-height:15.60px;color:#6e86bb;transform:scaleX(1.050);">Page Rankings</span>
<span class="t" style="left:72.5px;top:789.4px;font-size:13px;line-height:15.60px;color:#6e86bb;transform:scaleX(1.063);">Time</span>
<span class="t" style="left:54.5px;top:865.2px;font-size:11px;line-height:13.20px;color:#767676;transform:scaleX(1.069);">Check out more</span>
<span class="t" style="left:39.5px;top:878.2px;font-size:11px;line-height:13.20px;color:#767676;transform:scaleX(1.019);">Looker Studio SEO</span>
<span class="t" style="left:41.5px;top:891.7px;font-size:11px;line-height:13.20px;color:#767676;transform:scaleX(1.070);">Report Templates</span>
<span class="t" style="left:194.2px;top:60.9px;font-size:28.5px;line-height:34.20px;color:#080808;font-weight:700;transform:scaleX(1.110);-webkit-text-stroke:.5px #080808;">Organic Overview</span>
<span class="t" style="left:678.0px;top:68.9px;font-size:15px;line-height:18.00px;color:#333;transform:scaleX(1.106);">Get template</span>
<span class="t" style="left:840.0px;top:68.9px;font-size:15px;line-height:18.00px;color:#a0a0a0;">Glossary</span>
<span class="t" style="left:962.4px;top:68.9px;font-size:15px;line-height:18.00px;color:#a0a0a0;transform:scaleX(1.022);">Share</span>
<span class="t" style="left:1112.7px;top:66.6px;font-size:10px;line-height:12.00px;color:#666;transform:scaleX(1.027);">Default Data</span>
<span class="t" style="left:1112.7px;top:77.9px;font-size:11px;line-height:13.20px;color:#555;transform:scaleX(1.062);">Click to select your data</span>
<span class="t" style="left:1136.0px;top:107.5px;font-size:10.5px;line-height:12.60px;color:#5f9fd6;font-weight:700;transform:scaleX(1.087);">Demo with your account!</span>
<span class="t" style="left:1349.4px;top:69.1px;font-size:15.5px;line-height:18.60px;color:#333;transform:scaleX(0.970);">Feb 1, 2025 - Feb 28, 2025</span>
<span class="t" style="left:263.2px;top:150.3px;font-size:17px;line-height:20.40px;color:#8e8e92;font-weight:700;transform:scaleX(1.007);">+ Filter</span>
<span class="t" style="left:451.0px;top:150.4px;font-size:15px;line-height:18.00px;color:#444;transform:scaleX(1.084);">Search type<span style="font-size:13px;color:#777">: web</span></span>
<span class="t" style="left:749.7px;top:150.4px;font-size:15px;line-height:18.00px;color:#444;transform:scaleX(1.110);">Country</span>
<span class="t" style="left:1047.7px;top:150.4px;font-size:15px;line-height:18.00px;color:#444;transform:scaleX(1.078);">Device Category</span>
<span class="t" style="left:1356.2px;top:150.4px;font-size:15px;line-height:18.00px;color:#444;transform:scaleX(1.080);">Brand / Generic</span>
<span class="t" style="left:319.0px;top:247.4px;font-size:15px;line-height:18.00px;color:#7d7d7d;transform:scaleX(1.072);">Unique Pages</span>
<span class="t" style="left:319.0px;top:265.8px;font-size:29.6px;line-height:35.52px;color:#3c3c3c;transform:scaleX(1.033);">502</span>
<span class="t" style="left:332.7px;top:302.0px;font-size:14px;line-height:16.80px;color:#7b8a80;transform:scaleX(0.949);">2.2%</span>
<span class="t" style="left:679.4px;top:247.4px;font-size:15px;line-height:18.00px;color:#7d7d7d;transform:scaleX(1.077);">Unique Keywords</span>
<span class="t" style="left:679.4px;top:265.8px;font-size:29.6px;line-height:35.52px;color:#3c3c3c;transform:scaleX(0.871);">12,148</span>
<span class="t" style="left:692.4px;top:302.0px;font-size:14px;line-height:16.80px;color:#c26a6c;transform:scaleX(1.019);">-20.7%</span>
<span class="t" style="left:1049.3px;top:247.4px;font-size:15px;line-height:18.00px;color:#9a9a9a;transform:scaleX(1.069);">Impressions</span>
<span class="t" style="left:1049.3px;top:265.8px;font-size:29.6px;line-height:35.52px;color:#3c3c3c;transform:scaleX(0.947);">1,065,746</span>
<span class="t" style="left:1061.3px;top:302.0px;font-size:14px;line-height:16.80px;color:#76917f;">7.8%</span>
<span class="t" style="left:1192.9px;top:247.4px;font-size:15px;line-height:18.00px;color:#9a9a9a;transform:scaleX(1.015);">Clicks</span>
<span class="t" style="left:1192.9px;top:265.8px;font-size:29.6px;line-height:35.52px;color:#3c3c3c;transform:scaleX(0.872);">7,781</span>
<span class="t" style="left:1206.0px;top:302.0px;font-size:14px;line-height:16.80px;color:#7b8a80;">0.9%</span>
<span class="t" style="left:1336.8px;top:247.4px;font-size:15px;line-height:18.00px;color:#9a9a9a;transform:scaleX(0.902);">CTR</span>
<span class="t" style="left:1336.8px;top:265.8px;font-size:29.6px;line-height:35.52px;color:#3c3c3c;transform:scaleX(0.950);">0.73%</span>
<span class="t" style="left:1350.0px;top:302.0px;font-size:14px;line-height:16.80px;color:#c26a6c;transform:scaleX(1.025);">-6.4%</span>
<span class="t" style="left:1481.0px;top:247.4px;font-size:15px;line-height:18.00px;color:#555;transform:scaleX(1.057);">Average Position</span>
<span class="t" style="left:1481.0px;top:265.8px;font-size:29.6px;line-height:35.52px;color:#1c1c1c;transform:scaleX(0.967);">35.8</span>
<span class="t" style="left:1494.0px;top:302.0px;font-size:14px;line-height:16.80px;color:#6a6a6a;transform:scaleX(1.036);">-4%</span>
<span class="t" style="left:1456.7px;top:360.4px;font-size:10.5px;line-height:12.60px;color:#c2c2c2;transform:scaleX(1.115);">Change chart metrics</span>
<span class="t" style="left:201.8px;top:397.9px;font-size:16.6px;line-height:19.92px;color:#333;transform:scaleX(1.113);">Performance Over Time</span>
<span class="t" style="left:635.8px;top:388.4px;font-size:15px;line-height:18.00px;color:#333;transform:scaleX(1.076);">Do you trust your organic data? Audit your GA4 account in 4 seconds for free!</span>
<span class="t" style="left:1226.6px;top:421.7px;font-size:10.5px;line-height:12.60px;color:#cfcfcf;transform:scaleX(1.135);">Drill down from month to week to d</span>
<span class="t" style="left:296.4px;top:447.9px;font-size:13px;line-height:15.60px;color:#c0c0c0;">Clicks</span>
<span class="t" style="left:380.6px;top:447.9px;font-size:13px;line-height:15.60px;color:#c0c0c0;transform:scaleX(1.059);">Clicks (previous month)</span>
<span class="t" style="left:201.8px;top:767.6px;font-size:16.6px;line-height:19.92px;color:#333;transform:scaleX(1.106);">Keyword Rankings</span>
<span class="t" style="left:690.0px;top:767.6px;font-size:16.6px;line-height:19.92px;color:#333;transform:scaleX(1.107);">Device Performance</span>
<span class="t" style="left:1175.0px;top:767.5px;font-size:16.6px;line-height:19.92px;color:#333;transform:scaleX(1.125);">Country Performance</span>
<span class="t" style="left:234.6px;top:458.6px;font-size:12px;line-height:14.40px;color:#555;transform:scaleX(1.118);">600</span>
<span class="t" style="left:234.2px;top:525.4px;font-size:12px;line-height:14.40px;color:#555;transform:scaleX(1.138);">400</span>
<span class="t" style="left:234.6px;top:592.4px;font-size:12px;line-height:14.40px;color:#555;transform:scaleX(1.118);">200</span>
<span class="t" style="left:248.5px;top:660.1px;font-size:12px;line-height:14.40px;color:#555;transform:scaleX(1.271);">0</span>
<span class="t" style="left:253.5px;top:669.4px;font-size:12px;line-height:14.40px;color:#666;transform:scaleX(0.880);">Feb 1</span>
<span class="t" style="left:300.0px;top:683.4px;font-size:12px;line-height:14.40px;color:#666;transform:scaleX(0.945);">Feb 2</span>
<span class="t" style="left:347.4px;top:669.4px;font-size:12px;line-height:14.40px;color:#666;transform:scaleX(0.945);">Feb 3</span>
<span class="t" style="left:394.9px;top:683.4px;font-size:12px;line-height:14.40px;color:#666;transform:scaleX(0.945);">Feb 4</span>
<span class="t" style="left:442.4px;top:669.4px;font-size:12px;line-height:14.40px;color:#666;transform:scaleX(0.945);">Feb 5</span>
<span class="t" style="left:489.9px;top:683.4px;font-size:12px;line-height:14.40px;color:#666;transform:scaleX(0.945);">Feb 6</span>
<span class="t" style="left:537.3px;top:669.4px;font-size:12px;line-height:14.40px;color:#666;transform:scaleX(0.945);">Feb 7</span>
<span class="t" style="left:584.8px;top:683.4px;font-size:12px;line-height:14.40px;color:#666;transform:scaleX(0.945);">Feb 8</span>
<span class="t" style="left:632.3px;top:669.4px;font-size:12px;line-height:14.40px;color:#666;transform:scaleX(0.945);">Feb 9</span>
<span class="t" style="left:675.2px;top:683.4px;font-size:12px;line-height:14.40px;color:#666;transform:scaleX(1.017);">Feb 10</span>
<span class="t" style="left:723.7px;top:669.4px;font-size:12px;line-height:14.40px;color:#666;transform:scaleX(0.987);">Feb 11</span>
<span class="t" style="left:770.2px;top:683.4px;font-size:12px;line-height:14.40px;color:#666;transform:scaleX(1.017);">Feb 12</span>
<span class="t" style="left:817.6px;top:669.4px;font-size:12px;line-height:14.40px;color:#666;transform:scaleX(1.017);">Feb 13</span>
<span class="t" style="left:865.1px;top:683.4px;font-size:12px;line-height:14.40px;color:#666;transform:scaleX(1.017);">Feb 14</span>
<span class="t" style="left:912.6px;top:669.4px;font-size:12px;line-height:14.40px;color:#666;transform:scaleX(1.017);">Feb 15</span>
<span class="t" style="left:960.0px;top:683.4px;font-size:12px;line-height:14.40px;color:#666;transform:scaleX(1.017);">Feb 16</span>
<span class="t" style="left:1007.5px;top:669.4px;font-size:12px;line-height:14.40px;color:#666;transform:scaleX(1.017);">Feb 17</span>
<span class="t" style="left:1055.0px;top:683.4px;font-size:12px;line-height:14.40px;color:#666;transform:scaleX(1.017);">Feb 18</span>
<span class="t" style="left:1102.5px;top:669.4px;font-size:12px;line-height:14.40px;color:#666;transform:scaleX(1.017);">Feb 19</span>
<span class="t" style="left:1149.9px;top:683.4px;font-size:12px;line-height:14.40px;color:#666;transform:scaleX(1.017);">Feb 20</span>
<span class="t" style="left:1197.4px;top:669.4px;font-size:12px;line-height:14.40px;color:#666;transform:scaleX(1.017);">Feb 21</span>
<span class="t" style="left:1244.9px;top:683.4px;font-size:12px;line-height:14.40px;color:#666;transform:scaleX(1.017);">Feb 22</span>
<span class="t" style="left:1292.3px;top:669.4px;font-size:12px;line-height:14.40px;color:#666;transform:scaleX(1.017);">Feb 23</span>
<span class="t" style="left:1339.8px;top:683.4px;font-size:12px;line-height:14.40px;color:#666;transform:scaleX(1.017);">Feb 24</span>
<span class="t" style="left:1387.3px;top:669.4px;font-size:12px;line-height:14.40px;color:#666;transform:scaleX(1.017);">Feb 25</span>
<span class="t" style="left:1434.8px;top:683.4px;font-size:12px;line-height:14.40px;color:#666;transform:scaleX(1.017);">Feb 26</span>
<span class="t" style="left:1482.2px;top:669.4px;font-size:12px;line-height:14.40px;color:#666;transform:scaleX(1.017);">Feb 27</span>
<span class="t" style="left:1529.7px;top:683.4px;font-size:12px;line-height:14.40px;color:#666;transform:scaleX(1.017);">Feb 28</span>
<span class="t" style="left:0.0px;top:-6.3px;font-size:11px;line-height:13.20px;color:#555;font-style:italic;transform:rotate(-90deg);transform-origin:0 0;left:211.5px;top:581.5px;letter-spacing:.5px;">Clicks</span>
<span class="t" style="left:257.9px;top:798.3px;font-size:9.5px;line-height:11.40px;color:#c2c2c2;transform:scaleX(1.010);">1st Page - Top 3</span>
<span class="t" style="left:365.5px;top:798.3px;font-size:9.5px;line-height:11.40px;color:#c2c2c2;">1st Page - Top 10</span>
<span class="t" style="left:477.6px;top:798.3px;font-size:9.5px;line-height:11.40px;color:#c2c2c2;transform:scaleX(1.056);">2nd Page - Top 20</span>
<span class="t" style="left:210.3px;top:805.7px;font-size:12px;line-height:14.40px;color:#555;transform:scaleX(0.967);">2K</span>
<span class="t" style="left:212.5px;top:894.4px;font-size:12px;line-height:14.40px;color:#555;transform:scaleX(0.817);">1K</span>
<span class="t" style="left:857.8px;top:819.2px;font-size:10.5px;line-height:12.60px;color:#2d4f7d;transform:scaleX(1.032);">7.3%</span>

</body></html>
